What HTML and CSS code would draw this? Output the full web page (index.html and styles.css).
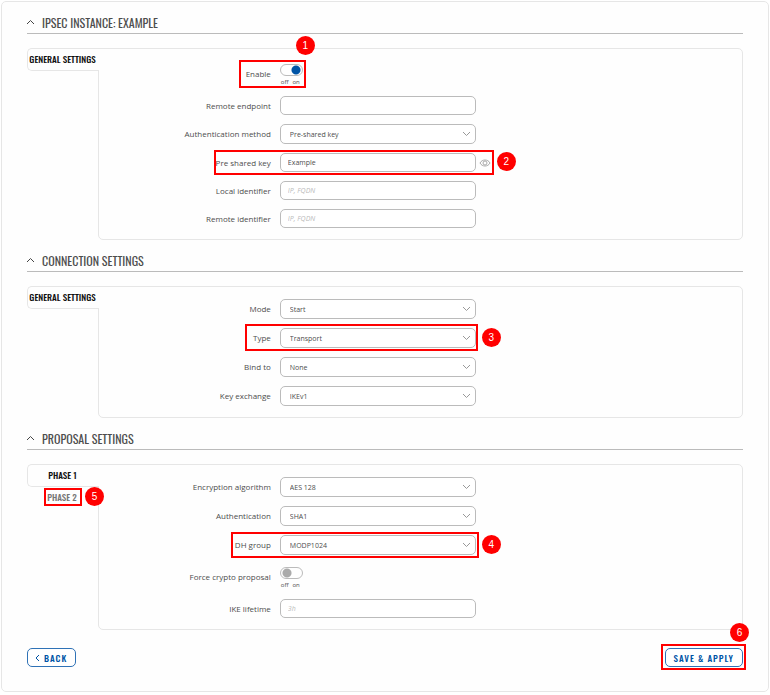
FILE: index.html
```html
<!DOCTYPE html>
<html lang="en">
<head>
    <meta charset="UTF-8">
    <meta name="viewport" content="width=device-width, initial-scale=1.0">
    <title>IPsec instance</title>
    <link rel="stylesheet" href="styles.css">
</head>
<body>
    <form class="card">
        <section class="section">
            <h2 class="section-title">
                <svg class="chevron" viewBox="0 0 9 6"><path d="M1 5 L4.5 1.5 L8 5"/></svg>
                IPsec instance: Example
            </h2>
            <div class="panel">
                <nav class="tabs">
                    <a class="tab active" href="#general">General settings</a>
                </nav>
                <div class="fields">
                    <div class="row">
                        <label for="enable">Enable</label>
                        <div class="control">
                            <input class="switch" type="checkbox" id="enable" checked>
                            <div class="switch-text"><span>off</span><span>on</span></div>
                            <div class="mark mark-enable"></div>
                            <span class="step step-enable">1</span>
                        </div>
                    </div>
                    <div class="row">
                        <label for="endpoint">Remote endpoint</label>
                        <div class="control"><input class="text" type="text" id="endpoint"></div>
                    </div>
                    <div class="row">
                        <label for="method">Authentication method</label>
                        <div class="control"><select id="method"><option>Pre-shared key</option></select></div>
                    </div>
                    <div class="row">
                        <label for="psk">Pre shared key</label>
                        <div class="control">
                            <input class="text" type="text" id="psk" value="Example">
                            <div class="mark mark-psk"></div>
                            <span class="step step-psk">2</span>
                        </div>
                        <button class="eye" type="button" aria-label="Show key">
                            <svg viewBox="0 0 12 8"><path d="M1 4 C3 0 9 0 11 4 C9 8 3 8 1 4 Z"/><circle cx="6" cy="4" r="2"/></svg>
                        </button>
                    </div>
                    <div class="row">
                        <label for="local-id">Local identifier</label>
                        <div class="control"><input class="text" type="text" id="local-id" placeholder="IP, FQDN"></div>
                    </div>
                    <div class="row">
                        <label for="remote-id">Remote identifier</label>
                        <div class="control"><input class="text" type="text" id="remote-id" placeholder="IP, FQDN"></div>
                    </div>
                </div>
            </div>
        </section>

        <section class="section">
            <h2 class="section-title">
                <svg class="chevron" viewBox="0 0 9 6"><path d="M1 5 L4.5 1.5 L8 5"/></svg>
                Connection settings
            </h2>
            <div class="panel">
                <nav class="tabs">
                    <a class="tab active" href="#connection">General settings</a>
                </nav>
                <div class="fields">
                    <div class="row">
                        <label for="mode">Mode</label>
                        <div class="control"><select id="mode"><option>Start</option></select></div>
                    </div>
                    <div class="row">
                        <label for="type">Type</label>
                        <div class="control">
                            <select id="type"><option>Transport</option></select>
                            <div class="mark mark-type"></div>
                            <span class="step step-select">3</span>
                        </div>
                    </div>
                    <div class="row">
                        <label for="bind">Bind to</label>
                        <div class="control"><select id="bind"><option>None</option></select></div>
                    </div>
                    <div class="row">
                        <label for="exchange">Key exchange</label>
                        <div class="control"><select id="exchange"><option>IKEv1</option></select></div>
                    </div>
                </div>
            </div>
        </section>

        <section class="section">
            <h2 class="section-title">
                <svg class="chevron" viewBox="0 0 9 6"><path d="M1 5 L4.5 1.5 L8 5"/></svg>
                Proposal settings
            </h2>
            <div class="panel">
                <nav class="tabs">
                    <a class="tab active" href="#phase1">Phase 1</a>
                    <a class="tab" href="#phase2">Phase 2
                        <span class="mark mark-phase"></span>
                        <span class="step step-phase">5</span>
                    </a>
                </nav>
                <div class="fields">
                    <div class="row">
                        <label for="encryption">Encryption algorithm</label>
                        <div class="control"><select id="encryption"><option>AES 128</option></select></div>
                    </div>
                    <div class="row">
                        <label for="authentication">Authentication</label>
                        <div class="control"><select id="authentication"><option>SHA1</option></select></div>
                    </div>
                    <div class="row">
                        <label for="dh">DH group</label>
                        <div class="control">
                            <select id="dh"><option>MODP1024</option></select>
                            <div class="mark mark-dh"></div>
                            <span class="step step-select">4</span>
                        </div>
                    </div>
                    <div class="row">
                        <label for="force">Force crypto proposal</label>
                        <div class="control">
                            <input class="switch" type="checkbox" id="force">
                            <div class="switch-text"><span>off</span><span>on</span></div>
                        </div>
                    </div>
                    <div class="row">
                        <label for="lifetime">IKE lifetime</label>
                        <div class="control"><input class="text" type="text" id="lifetime" placeholder="3h"></div>
                    </div>
                </div>
            </div>
        </section>

        <div class="actions">
            <button class="btn" type="button">
                <svg class="back-icon" viewBox="0 0 5 8"><path d="M4 1 L1 4 L4 7"/></svg>
                Back
            </button>
            <button class="btn" type="submit">
                Save &amp; Apply
                <span class="mark mark-save"></span>
                <span class="step step-save">6</span>
            </button>
        </div>
    </form>
</body>
</html>
```

FILE: styles.css
```css
* {
    box-sizing: border-box;
}

body {
    margin: 1px;
    background-color: #fff;
    color: #4d4d4d;
    font-family: "Open Sans", sans-serif;
    font-size: 8px;
}

.card {
    padding: 10px 25px 24px;
    background-color: #fefefe;
    border: 1px solid #e6e6e6;
    border-radius: 5px;
}

/* Section headings */
.section-title {
    display: flex;
    align-items: center;
    gap: 7px;
    height: 22px;
    margin: 0 0 14px;
    padding-bottom: 1px;
    border-bottom: 1px solid #bbb;
    font-family: "Oswald", "Liberation Sans Narrow", sans-serif;
    font-size: 12px;
    font-weight: 400;
    text-transform: uppercase;
}

.section {
    margin-bottom: 10px;
}

.chevron {
    width: 9px;
    height: 6px;
    margin-left: -1px;
    fill: none;
    stroke: #444;
}

/* Tabs and field panels */
.panel {
    display: flex;
}

.tabs {
    position: relative;
    z-index: 1;
    width: 72px;
    margin-right: -1px;
}

.tab {
    position: relative;
    display: block;
    height: 21px;
    padding-right: 2px;
    line-height: 21px;
    color: #777;
    font-family: "Oswald", "Liberation Sans Narrow", sans-serif;
    font-size: 9px;
    font-weight: 500;
    text-align: center;
    text-decoration: none;
    text-transform: uppercase;
}

.tab.active {
    height: 23px;
    background-color: #fefefe;
    border: 1px solid #e6e6e6;
    border-right: none;
    border-radius: 5px 0 0 5px;
    color: #111;
}

.fields {
    flex: 1;
    display: flex;
    flex-direction: column;
    gap: 9px;
    padding: 12px 0 11px;
    border: 1px solid #e6e6e6;
    border-radius: 0 5px 5px 5px;
}

.row {
    display: grid;
    grid-template-columns: 36fr 39fr 53fr;
    align-items: center;
}

.row label {
    padding-right: 9px;
    line-height: 10px;
    text-align: right;
}

.control {
    position: relative;
}

.text,
select {
    display: block;
    width: 100%;
    height: 19px;
    padding: 0 7px;
    background-color: #fff;
    border: 1px solid #bbb;
    border-radius: 5px;
    color: #4d4d4d;
    font-family: inherit;
    font-size: 7px;
}

.text::placeholder {
    color: #bbb;
    font-style: italic;
}

select {
    height: 20px;
    padding: 0 9px;
    appearance: none;
    background: #fff url("data:image/svg+xml,%3Csvg xmlns='http://www.w3.org/2000/svg' viewBox='0 0 9 6'%3E%3Cpath d='M1 1 L4.5 4.5 L8 1' fill='none' stroke='%23999'/%3E%3C/svg%3E") no-repeat right 4px center / 9px 6px;
}

/* On/off switch */
.switch {
    display: block;
    width: 23px;
    height: 12px;
    margin: 3px 0 0;
    appearance: none;
    background: radial-gradient(circle at 6px 5px, #aaa 4px, transparent 5px);
    border: 1px solid #bbb;
    border-radius: 6px;
}

.switch:checked {
    background: radial-gradient(circle at 15px 5px, #0054a6 4px, transparent 5px);
}

.switch-text {
    display: flex;
    gap: 4px;
    height: 11px;
    padding-left: 1px;
    font-size: 6px;
    line-height: 13px;
}

.eye {
    width: 12px;
    height: 8px;
    margin-left: 3px;
    padding: 0;
    background: none;
    border: none;
}

.eye svg {
    display: block;
    fill: none;
    stroke: #aaa;
}

/* Buttons */
.actions {
    display: flex;
    justify-content: space-between;
    padding-top: 8px;
}

.btn {
    position: relative;
    display: flex;
    align-items: center;
    gap: 4px;
    height: 19px;
    padding: 0 8px;
    background-color: #fff;
    border: 1px solid #2f72b6;
    border-radius: 5px;
    color: #0054a6;
    font-family: "Oswald", "Liberation Sans Narrow", sans-serif;
    font-size: 9px;
    font-weight: 500;
    letter-spacing: 1px;
    text-transform: uppercase;
}

.back-icon {
    width: 5px;
    height: 8px;
    margin-left: -1px;
    fill: none;
    stroke: #0054a6;
}

/* Numbered steps drawn over the form */
.mark {
    position: absolute;
    border: 2px solid #f00;
    pointer-events: none;
}

.step {
    position: absolute;
    width: 19px;
    height: 19px;
    background-color: #f00;
    border-radius: 50%;
    color: #fff;
    font-family: "Liberation Sans", sans-serif;
    font-size: 10px;
    letter-spacing: normal;
    line-height: 19px;
    text-align: center;
}

.mark-enable {
    top: -1px;
    bottom: -1px;
    left: -41px;
    width: 67px;
}

.step-enable {
    top: -25px;
    left: 16px;
}

.mark-psk {
    top: -3px;
    bottom: -3px;
    left: -66px;
    right: -18px;
}

.step-psk {
    top: -1px;
    right: -40px;
}

.mark-type {
    top: -4px;
    bottom: -3px;
    left: -35px;
    right: -2px;
}

.mark-dh {
    top: -3px;
    bottom: -3px;
    left: -49px;
    right: -3px;
}

.step-select {
    top: 0;
    right: -25px;
}

.mark-phase {
    top: 1px;
    bottom: 2px;
    left: 17px;
    right: 17px;
}

.step-phase {
    top: 0;
    left: 58px;
}

.mark-save {
    top: -5px;
    bottom: -4px;
    left: -5px;
    right: -4px;
}

.step-save {
    top: -26px;
    right: -7px;
}
```
